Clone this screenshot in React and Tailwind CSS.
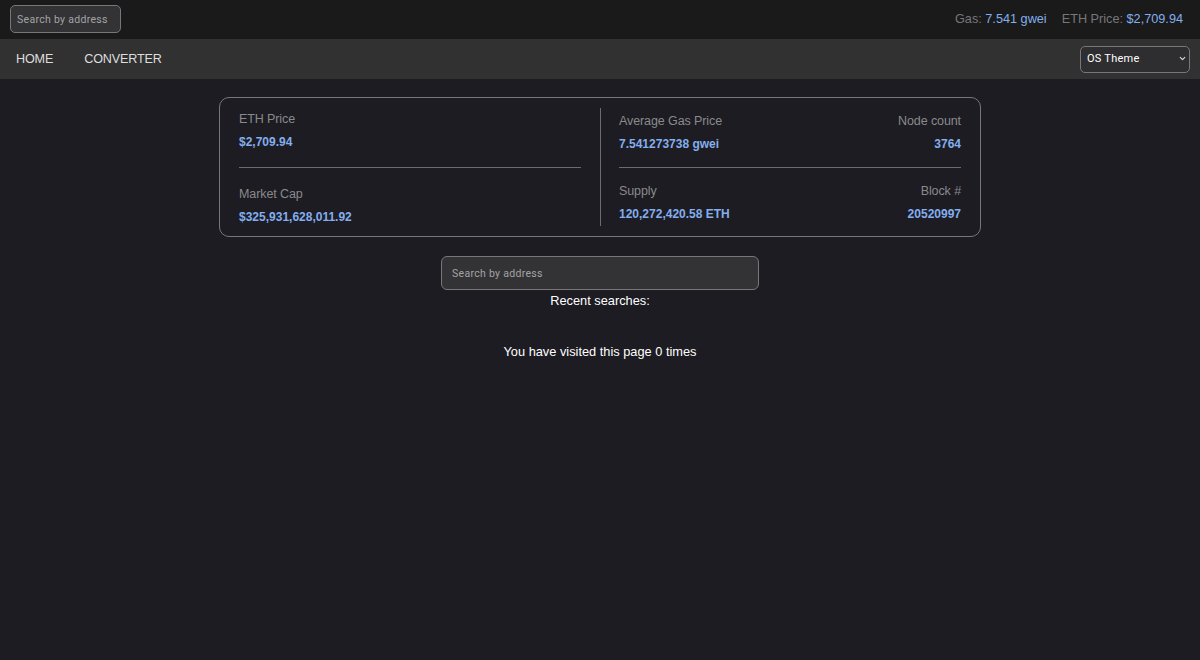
import { ChevronDown } from 'lucide-react';

const sans = "font-['Liberation_Sans',Arial,sans-serif]";

function Stat({ label, value, right, className }) {
    return (
        <div className={`flex flex-col ${right ? 'items-end' : 'items-start'} ${className}`}>
            <div className="text-[12.5px] leading-[16px] tracking-[-0.1px] text-[#8a8a8c]">{label}</div>
            <div className="mt-[7px] text-[12px] leading-[16px] font-bold text-[#84aeee]">{value}</div>
        </div>
    );
}

function Divider() {
    return <div className="h-px w-full bg-[#6c6c6e]" />;
}

export default function App() {
    return (
        <div className={`min-h-[660px] bg-[#1c1c22] ${sans}`}>
            <header className="flex h-[39px] items-start justify-between bg-[#1a1a1b] pl-[10px] pr-[17px] pt-[5px]">
                <input
                    type="text"
                    placeholder="Search by address"
                    className="h-[28px] w-[111px] rounded-[5px] border border-[#77777a] bg-[#333335] px-[6px] font-['Roboto',sans-serif] text-[10.5px] tracking-[0.3px] text-white placeholder-[#a4a4a6] outline-none"
                />
                <div className="flex gap-[15px] pt-[6px] text-[12.7px] leading-[16px] text-[#77777a]">
                    <span>Gas: <span className="text-[#84aeee]">7.541 gwei</span></span>
                    <span>ETH Price: <span className="text-[#84aeee]">$2,709.94</span></span>
                </div>
            </header>

            <nav className="flex h-[40px] items-start justify-between bg-[#313131] pl-[16px] pr-[10px] pt-[6px]">
                <div className="flex gap-[31px] pt-[6px] text-[12.6px] leading-[16px] tracking-[-0.15px] text-[#dedede]">
                    <a>HOME</a>
                    <a>CONVERTER</a>
                </div>
                <div className="relative">
                    <select className="h-[27px] w-[110px] appearance-none rounded-[5px] border border-[#77777a] bg-[#2e2e30] pl-[6px] font-['Roboto',sans-serif] text-[11px] tracking-[0.25px] text-white outline-none">
                        <option>OS Theme</option>
                    </select>
                    <ChevronDown className="pointer-events-none absolute right-[3px] top-[9px] h-[9px] w-[9px] text-[#dddddd]" strokeWidth={3} />
                </div>
            </nav>

            <main className="flex flex-col items-center pt-[18px]">
                <section className="grid h-[140px] w-[762px] grid-cols-[362px_1fr] rounded-[10px] border border-[#77777a] px-[19px] py-[10px]">
                    <div className="flex flex-col border-r border-[#6c6c6e] pr-[19px]">
                        <Stat label="ETH Price" value="$2,709.94" className="h-[59px] pt-[3px]" />
                        <Divider />
                        <Stat label="Market Cap" value="$325,931,628,011.92" className="pt-[18px]" />
                    </div>
                    <div className="flex flex-col pl-[18px]">
                        <div className="flex h-[59px] justify-between pt-[5px]">
                            <Stat label="Average Gas Price" value="7.541273738 gwei" />
                            <Stat label="Node count" value="3764" right />
                        </div>
                        <Divider />
                        <div className="flex justify-between pt-[15px]">
                            <Stat label="Supply" value="120,272,420.58 ETH" />
                            <Stat label="Block #" value="20520997" right />
                        </div>
                    </div>
                </section>

                <input
                    type="text"
                    placeholder="Search by address"
                    className="mt-[19px] h-[34px] w-[318px] rounded-[6px] border border-[#77777a] bg-[#333335] px-[10px] font-['Roboto',sans-serif] text-[10.5px] tracking-[0.3px] text-white placeholder-[#a4a4a6] outline-none"
                />
                <p className="mt-[3px] text-[12.8px] leading-[16px] text-white">Recent searches:</p>
                <p className="mt-[35px] text-[12.8px] leading-[16px] text-white">You have visited this page 0 times</p>
            </main>
        </div>
    );
}
